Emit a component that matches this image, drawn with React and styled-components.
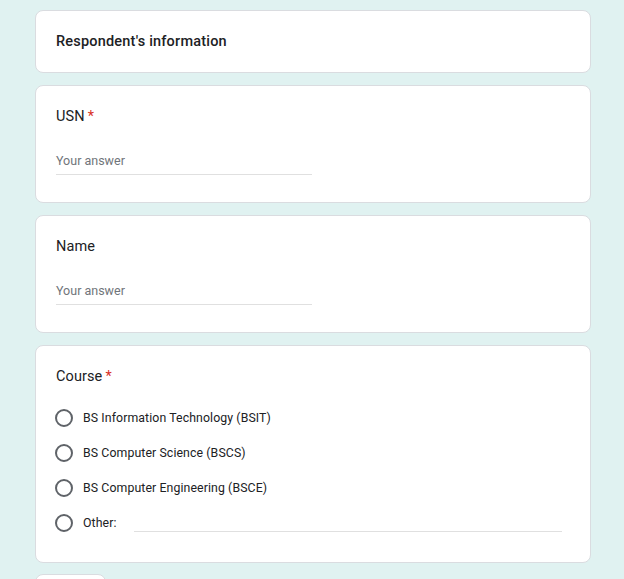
import React from "react";
import styled, { createGlobalStyle } from "styled-components";

const GlobalStyle = createGlobalStyle`
  html, body {
    margin: 0;
    padding: 0;
    background: #e0f2f1;
    font-family: Roboto, "Liberation Sans", Arial, sans-serif;
    color: #202124;
  }
`;

const Page = styled.div`
  width: 624px;
  height: 579px;
  overflow: hidden;
  box-sizing: border-box;
  padding: 10px 0 0 35px;
  display: flex;
  flex-direction: column;
  gap: 12px;
`;

const Card = styled.div`
  width: 556px;
  box-sizing: border-box;
  background: #fff;
  border: 1px solid #dadce0;
  border-radius: 8px;
  padding: ${(p) => p.$pad || "24px 20px"};
  flex-shrink: 0;
`;

const Title = styled.div`
  font-size: 14.5px;
  font-weight: 500;
  color: #202124;
  line-height: 20px;
  letter-spacing: 0.2px;
`;

const Label = styled.div`
  font-size: 14.5px;
  color: #202124;
  line-height: 20px;
  letter-spacing: 0.1px;
`;

const Star = styled.span`
  color: #d93025;
  margin-left: 3px;
`;

const Answer = styled.div`
  margin-top: 26px;
  width: 256px;
  font-size: 12.5px;
  color: #70757a;
  padding-bottom: 5px;
  border-bottom: 1px solid #e0e0e0;
  line-height: 16px;
`;

const Options = styled.div`
  margin-top: 21px;
  display: flex;
  flex-direction: column;
  gap: 15px;
`;

const Option = styled.div`
  display: flex;
  align-items: center;
  height: 20px;
`;

const Radio = styled.div`
  width: 14px;
  height: 14px;
  margin-left: -1px;
  border: 2px solid #5f6368;
  border-radius: 50%;
  flex-shrink: 0;
`;

const OptionText = styled.span`
  margin-left: 10px;
  font-size: 12.3px;
  color: #202124;
  letter-spacing: 0.1px;
`;

const OtherLine = styled.div`
  flex: 1;
  margin-left: 17px;
  margin-right: 8px;
  align-self: flex-end;
  margin-bottom: 1px;
  border-bottom: 1px solid #e0e0e0;
`;

const Stub = styled.div`
  width: 69px;
  height: 30px;
  margin-top: -1px;
  background: #fff;
  border: 1px solid #dadce0;
  border-radius: 8px;
  flex-shrink: 0;
`;

const courses = [
  "BS Information Technology (BSIT)",
  "BS Computer Science (BSCS)",
  "BS Computer Engineering (BSCE)",
];

export default function App() {
  return (
    <>
      <GlobalStyle />
      <Page>
        <Card $pad="21px 20px 20px">
          <Title>Respondent's information</Title>
        </Card>
        <Card $pad="21px 20px 27px">
          <Label>
            USN<Star>*</Star>
          </Label>
          <Answer>Your answer</Answer>
        </Card>
        <Card $pad="21px 20px 27px">
          <Label>Name</Label>
          <Answer>Your answer</Answer>
        </Card>
        <Card $pad="21px 20px 29px">
          <Label>
            Course<Star>*</Star>
          </Label>
          <Options>
            {courses.map((c) => (
              <Option key={c}>
                <Radio />
                <OptionText>{c}</OptionText>
              </Option>
            ))}
            <Option>
              <Radio />
              <OptionText>Other:</OptionText>
              <OtherLine />
            </Option>
          </Options>
        </Card>
        <Stub />
      </Page>
    </>
  );
}
